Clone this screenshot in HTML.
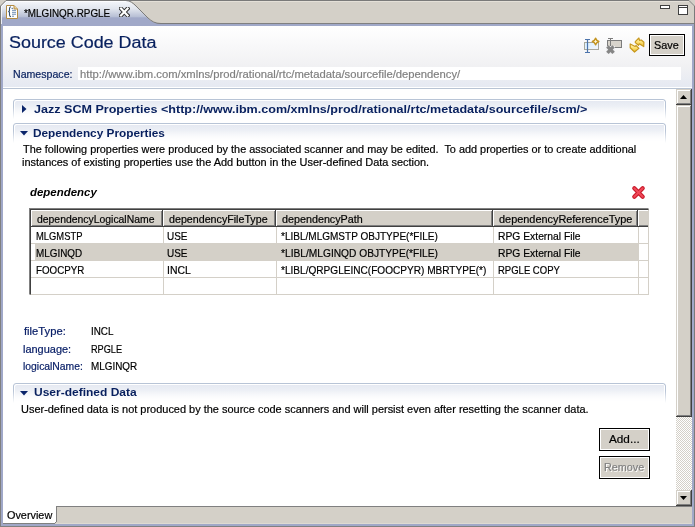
<!DOCTYPE html>
<html><head><meta charset="utf-8">
<style>
*{margin:0;padding:0;box-sizing:border-box}
html,body{width:695px;height:527px;overflow:hidden;background:#d4d0c8;font-family:"Liberation Sans",sans-serif;font-size:11px;color:#000}
.a{position:absolute}
.t{position:absolute;white-space:nowrap;line-height:13px;font-size:11px;transform-origin:0 0}
.nv{color:#0a246a}
.b{font-weight:bold}
</style></head><body>
<!-- outer frame -->
<div class="a" style="left:6px;top:0;width:683px;height:1px;background:#7a7a7a"></div>
<div class="a" style="left:6px;top:1px;width:683px;height:1px;background:#e4e0d8"></div>
<div class="a" style="left:0;top:6px;width:1px;height:521px;background:#808080"></div>
<div class="a" style="left:694px;top:6px;width:1px;height:521px;background:#7a7a7a"></div>
<svg class="a" style="left:688px;top:0" width="7" height="7"><path d="M1,0.5 L6.5,6" stroke="#7a7a7a" stroke-width="0.9"/></svg>
<!-- tab bar bottom line -->
<div class="a" style="left:1px;top:23px;width:693px;height:1px;background:#808080"></div>
<div class="a" style="left:1px;top:24px;width:693px;height:2px;background:#a0a8c8"></div>
<!-- active tab -->
<svg class="a" style="left:0;top:0" width="200" height="26">
<defs><linearGradient id="tg" x1="0" y1="0" x2="0" y2="1">
<stop offset="0" stop-color="#f4f6fa"/><stop offset="0.3" stop-color="#e2e6ee"/><stop offset="0.64" stop-color="#b6bed4"/><stop offset="0.67" stop-color="#a0a8c8"/><stop offset="1" stop-color="#a0a8c8"/></linearGradient></defs>
<path d="M1,26 L1,6 L6,1 L126,1 C130,1 133,3.5 136,6.5 L148,18.5 C152,22 155,23.5 161,23.5 L200,23.5 L200,26 Z" fill="url(#tg)"/>
<path d="M0.5,26 L0.5,6 L6,0.5 L126,0.5 C130,0.5 133,3 136,6 L148,18 C152,21.5 155,23.5 161,23.5 L200,23.5" fill="none" stroke="#7a7a7a" stroke-width="1"/>
<path d="M1.5,26 L1.5,6.5 L6.5,1.5 L126,1.5" fill="none" stroke="#fff" stroke-opacity="0.8" stroke-width="1"/>
</svg>
<!-- left/right lavender borders -->
<div class="a" style="left:1px;top:24px;width:2px;height:500px;background:#a0a8c8"></div>
<div class="a" style="left:692px;top:24px;width:2px;height:500px;background:#a0a8c8"></div>
<div class="a" style="left:1px;top:524px;width:693px;height:2px;background:#a0a8c8"></div>
<div class="a" style="left:0;top:526px;width:695px;height:1px;background:#808080"></div>

<!-- tab title -->
<svg class="a" style="left:6px;top:5px" width="12" height="14">
<path d="M0.5,0.5 L8,0.5 L11.5,4 L11.5,13.5 L0.5,13.5 Z" fill="#fff" stroke="#b48c44"/>
<path d="M8,0.5 L8,4 L11.5,4" fill="#ecd498" stroke="#b48c44"/>
<path d="M5,1.8 Q3.5,2 3.5,3.5 L3.5,5.5 Q3.5,6.5 2.2,6.5 Q3.5,6.5 3.5,7.5 L3.5,10 Q3.5,11.5 5,11.8" fill="none" stroke="#34506e" stroke-width="1.1"/>
<rect x="5.6" y="2.8" width="1.2" height="1.2" fill="#4a6a8c"/>
<rect x="6" y="4.8" width="4" height="1.1" fill="#7c98bc"/>
<rect x="6" y="6.8" width="4" height="1.1" fill="#7c98bc"/>
<rect x="6" y="8.7" width="4" height="1.1" fill="#7c98bc"/>
<rect x="6" y="10.7" width="2" height="1.1" fill="#7c98bc"/>
</svg>
<div class="t" style="left:23.8px;top:6.8px;transform:scaleX(0.8979);;-webkit-text-stroke-width:0.2px;">*MLGINQR.RPGLE</div>
<svg class="a" style="left:119px;top:7px" width="11" height="10">
<path d="M2,1.6 L8.6,8.4 M8.6,1.6 L2,8.4" stroke="#303030" stroke-width="4.2" stroke-linecap="square"/>
<path d="M2,1.6 L8.6,8.4 M8.6,1.6 L2,8.4" stroke="#fff" stroke-width="2.2" stroke-linecap="square"/>
</svg>
<!-- min / max -->
<div class="a" style="left:660px;top:5px;width:10px;height:4px;border:1px solid #404040;background:#fff"></div>
<div class="a" style="left:678px;top:5px;width:10px;height:10px;border:1px solid #404040;background:#fff;box-shadow:inset 0 1px #fff,inset 0 2px #404040"></div>

<!-- content white -->
<div class="a" style="left:3px;top:26px;width:689px;height:480px;background:#fff"></div>
<!-- header gradient -->
<div class="a" style="left:3px;top:26px;width:689px;height:61px;background:linear-gradient(#fff 0%,#f1f1f3 66%,#e5e9f2 100%)"></div>
<div class="a" style="left:3px;top:88px;width:689px;height:1px;background:#b8c4d4"></div>

<div class="t" style="left:8.68px;top:32.6px;transform:scaleX(1.1198);font-size:16px;line-height:20px;-webkit-text-stroke-width:0.2px;color:#08205e">Source Code Data</div>
<div class="t" style="left:12.74px;top:68.0px;transform:scaleX(0.9633);;-webkit-text-stroke-width:0.2px;color:#08205e">Namespace:</div>
<div class="a" style="left:78px;top:67px;width:603px;height:13px;background:#fff"></div>
<div class="t" style="left:79.68px;top:68.0px;transform:scaleX(1.0229);;-webkit-text-stroke-width:0.2px;color:#808080">http://www.ibm.com/xmlns/prod/rational/rtc/metadata/sourcefile/dependency/</div>

<!-- toolbar icons -->
<svg class="a" style="left:580px;top:34px" width="24" height="24">
<defs><linearGradient id="ig1" x1="0" y1="0" x2="1" y2="1"><stop offset="0" stop-color="#d8f0ff"/><stop offset="1" stop-color="#f4f6fa"/></linearGradient>
<linearGradient id="gold" x1="0" y1="0" x2="0" y2="1"><stop offset="0" stop-color="#fff8d0"/><stop offset="0.5" stop-color="#fce070"/><stop offset="1" stop-color="#e8b830"/></linearGradient></defs>
<rect x="4.5" y="8.5" width="14" height="7" fill="url(#ig1)" stroke="#a8a89c"/>
<path d="M5,5.5 H10 M7.5,5.5 V18.5 M5,18.5 H10" stroke="#4c74ac" stroke-width="1.2"/>
<path d="M15.6,4.2 Q16.4,6.6 18.8,7.5 Q16.4,8.4 15.6,10.8 Q14.8,8.4 12.4,7.5 Q14.8,6.6 15.6,4.2 Z" fill="#fff8d8" stroke="#c49420" stroke-width="1.5" stroke-linejoin="round"/>
</svg>
<svg class="a" style="left:602px;top:34px" width="24" height="24">
<rect x="5.5" y="6.5" width="14" height="7" fill="#d8d4cc" stroke="#7c7c7c"/>
<path d="M6,4.5 H11 M8.5,4.5 V12" stroke="#7c7c7c" stroke-width="1"/>
<rect x="4" y="12" width="9" height="8" fill="#f1f1f3"/>
<path d="M6.6,13.6 L10.4,17.6 M10.4,13.6 L6.6,17.6" stroke="#858585" stroke-width="3.4" stroke-linecap="square"/>
</svg>
<svg class="a" style="left:628px;top:36px" width="18" height="18">
<path d="M10.9,2 L7.3,5.6 L7.3,6.6 L10.5,9.3 L11.3,7.8 L15.7,10.6 L15.9,6.3 L13.3,4 L11.5,4.3 Z" fill="url(#gold)" stroke="#c8981c" stroke-width="1.2" stroke-linejoin="round"/>
<path d="M2.2,8 L2.2,11.8 L6.5,16 L10.9,12.4 L8,9.5 L7.2,10.5 Z" fill="url(#gold)" stroke="#c8981c" stroke-width="1.2" stroke-linejoin="round"/>
</svg>
<!-- Save button -->
<div class="a" style="left:649px;top:34px;width:36px;height:22px;border:1px solid #000;background:#d4d0c8;box-shadow:inset 0 0 0 1px #fff"></div>
<div class="t" style="left:653.71px;top:38.8px;transform:scaleX(0.9875);;-webkit-text-stroke-width:0.2px;">Save</div>

<!-- scrollbar -->
<div class="a" style="left:676px;top:89px;width:16px;height:417px;background:repeating-conic-gradient(#d4d0c8 0 25%,#fff 0 50%) 0 0/2px 2px"></div>
<div class="a" style="left:676px;top:89px;width:16px;height:16px;background:#d4d0c8;box-shadow:inset -1px -1px #404040,inset 1px 1px #d4d0c8,inset -2px -2px #808080,inset 2px 2px #fff"></div>
<svg class="a" style="left:680px;top:95px" width="8" height="4"><path d="M3.5,0 L7,4 L0,4 Z" fill="#000"/></svg>
<div class="a" style="left:676px;top:105px;width:16px;height:312px;background:#d4d0c8;box-shadow:inset -1px -1px #404040,inset 1px 1px #d4d0c8,inset -2px -2px #808080,inset 2px 2px #fff"></div>
<div class="a" style="left:676px;top:490px;width:16px;height:16px;background:#d4d0c8;box-shadow:inset -1px -1px #404040,inset 1px 1px #d4d0c8,inset -2px -2px #808080,inset 2px 2px #fff"></div>
<svg class="a" style="left:680px;top:496px" width="8" height="4"><path d="M0,0 L7,0 L3.5,4 Z" fill="#000"/></svg>

<!-- section 1 -->
<div class="a" style="left:13px;top:99px;width:653px;height:20px;border:1px solid #b8c4d6;border-bottom:none;border-radius:3px 3px 0 0;background:linear-gradient(#e4e8f1,#fff);box-shadow:inset 1px 1px #fff,inset -1px 0 #fff;-webkit-mask-image:linear-gradient(#000 40%,transparent)"></div>
<svg class="a" style="left:22px;top:105px" width="5" height="8"><path d="M0,0 L4.5,4 L0,8 Z" fill="#0a246a"/></svg>
<div class="t" style="left:34.0px;top:102.8px;transform:scaleX(1.1412);font-weight:bold;color:#08205e">Jazz SCM Properties &lt;http://www.ibm.com/xmlns/prod/rational/rtc/metadata/sourcefile/scm/&gt;</div>

<!-- section 2 -->
<div class="a" style="left:13px;top:123px;width:653px;height:20px;border:1px solid #b8c4d6;border-bottom:none;border-radius:3px 3px 0 0;background:linear-gradient(#e4e8f1,#fff);box-shadow:inset 1px 1px #fff,inset -1px 0 #fff;-webkit-mask-image:linear-gradient(#000 40%,transparent)"></div>
<svg class="a" style="left:20px;top:131px" width="8" height="5"><path d="M0,0 L8,0 L4,4.5 Z" fill="#0a246a"/></svg>
<div class="t" style="left:32.63px;top:126.5px;transform:scaleX(1.0738);font-weight:bold;color:#08205e">Dependency Properties</div>
<div class="t" style="left:22.7px;top:142.7px;transform:scaleX(0.9892);;-webkit-text-stroke-width:0.2px;">The following properties were produced by the associated scanner and may be edited.&nbsp; To add properties or to create additional</div>
<div class="t" style="left:21.7px;top:155.6px;transform:scaleX(0.9953);;-webkit-text-stroke-width:0.2px;">instances of existing properties use the Add button in the User-defined Data section.</div>

<div class="t" style="left:30.1px;top:185.8px;transform:scaleX(1.04);font-weight:bold;font-style:italic;">dependency</div>
<svg class="a" style="left:631px;top:185px" width="15" height="15">
<path d="M3.3,3.3 L11.7,11.7 M11.7,3.3 L3.3,11.7" stroke="#c81828" stroke-width="4.2" stroke-linecap="round"/>
<path d="M3.3,3.3 L11.7,11.7 M11.7,3.3 L3.3,11.7" stroke="#f04858" stroke-width="2" stroke-linecap="round"/>
</svg>

<!-- table -->
<div class="a" style="left:29px;top:208px;width:620px;height:87px;background:#fff;border-left:1px solid #808080;border-top:1px solid #808080;border-right:1px solid #fff;border-bottom:1px solid #fff"></div>
<div class="a" style="left:30px;top:209px;width:619px;height:86px;border-left:1px solid #404040;border-top:1px solid #404040;border-right:1px solid #d4d0c8;border-bottom:1px solid #d4d0c8"></div>
<!-- header cells -->
<div class="a" style="left:31px;top:210px;width:132px;height:17px;background:#d4d0c8;box-shadow:inset -1px -1px #404040,inset 1px 1px #fff,inset -2px -2px #808080"></div>
<div class="a" style="left:163px;top:210px;width:113px;height:17px;background:#d4d0c8;box-shadow:inset -1px -1px #404040,inset 1px 1px #fff,inset -2px -2px #808080"></div>
<div class="a" style="left:276px;top:210px;width:217px;height:17px;background:#d4d0c8;box-shadow:inset -1px -1px #404040,inset 1px 1px #fff,inset -2px -2px #808080"></div>
<div class="a" style="left:493px;top:210px;width:145px;height:17px;background:#d4d0c8;box-shadow:inset -1px -1px #404040,inset 1px 1px #fff,inset -2px -2px #808080"></div>
<div class="a" style="left:638px;top:210px;width:10px;height:17px;background:#d4d0c8;box-shadow:inset 0 -1px #404040,inset 1px 1px #fff,inset 0 -2px #808080"></div>
<!-- selected row -->
<div class="a" style="left:35px;top:244px;width:603px;height:16px;background:#d4d0c8"></div>
<!-- grid -->
<div class="a" style="left:31px;top:243px;width:617px;height:1px;background:#d4d0c8"></div>
<div class="a" style="left:31px;top:260px;width:617px;height:1px;background:#d4d0c8"></div>
<div class="a" style="left:31px;top:277px;width:617px;height:1px;background:#d4d0c8"></div>
<div class="a" style="left:163px;top:227px;width:1px;height:67px;background:#d4d0c8"></div>
<div class="a" style="left:276px;top:227px;width:1px;height:67px;background:#d4d0c8"></div>
<div class="a" style="left:493px;top:227px;width:1px;height:67px;background:#d4d0c8"></div>
<div class="a" style="left:638px;top:227px;width:1px;height:67px;background:#d4d0c8"></div>
<!-- header text -->
<div class="t" style="left:37.0px;top:212.7px;transform:scaleX(0.946);;-webkit-text-stroke-width:0.2px;">dependencyLogicalName</div>
<div class="t" style="left:169.0px;top:212.7px;transform:scaleX(0.9713);;-webkit-text-stroke-width:0.2px;">dependencyFileType</div>
<div class="t" style="left:281.8px;top:212.7px;transform:scaleX(0.978);;-webkit-text-stroke-width:0.2px;">dependencyPath</div>
<div class="t" style="left:498.6px;top:212.7px;transform:scaleX(0.991);;-webkit-text-stroke-width:0.2px;">dependencyReferenceType</div>
<!-- rows -->
<div class="t" style="left:36.05px;top:230.0px;transform:scaleX(0.8528);;-webkit-text-stroke-width:0.2px;">MLGMSTP</div>
<div class="t" style="left:167.4px;top:230.0px;transform:scaleX(0.9048);;-webkit-text-stroke-width:0.2px;">USE</div>
<div class="t" style="left:281.3px;top:230.0px;transform:scaleX(0.911);;-webkit-text-stroke-width:0.2px;">*LIBL/MLGMSTP OBJTYPE(*FILE)</div>
<div class="t" style="left:497.66px;top:230.0px;transform:scaleX(0.9379);;-webkit-text-stroke-width:0.2px;">RPG External File</div>
<div class="t" style="left:36.0px;top:247.0px;transform:scaleX(0.898);;-webkit-text-stroke-width:0.2px;">MLGINQD</div>
<div class="t" style="left:167.4px;top:247.0px;transform:scaleX(0.9048);;-webkit-text-stroke-width:0.2px;">USE</div>
<div class="t" style="left:281.3px;top:247.0px;transform:scaleX(0.9272);;-webkit-text-stroke-width:0.2px;">*LIBL/MLGINQD OBJTYPE(*FILE)</div>
<div class="t" style="left:497.66px;top:247.0px;transform:scaleX(0.9379);;-webkit-text-stroke-width:0.2px;">RPG External File</div>
<div class="t" style="left:36.11px;top:264.0px;transform:scaleX(0.8868);;-webkit-text-stroke-width:0.2px;">FOOCPYR</div>
<div class="t" style="left:167.35px;top:264.0px;transform:scaleX(0.95);;-webkit-text-stroke-width:0.2px;">INCL</div>
<div class="t" style="left:281.3px;top:264.0px;transform:scaleX(0.9161);;-webkit-text-stroke-width:0.2px;">*LIBL/QRPGLEINC(FOOCPYR) MBRTYPE(*)</div>
<div class="t" style="left:497.74px;top:264.0px;transform:scaleX(0.8643);;-webkit-text-stroke-width:0.2px;">RPGLE COPY</div>

<!-- properties -->
<div class="t" style="left:23.7px;top:325.0px;transform:scaleX(1.02);;-webkit-text-stroke-width:0.2px;color:#0a2068">fileType:</div>
<div class="t" style="left:91.1px;top:325.0px;transform:scaleX(0.8958);;-webkit-text-stroke-width:0.2px;">INCL</div>
<div class="t" style="left:22.7px;top:342.5px;transform:scaleX(0.9957);;-webkit-text-stroke-width:0.2px;color:#0a2068">language:</div>
<div class="t" style="left:91.17px;top:342.5px;transform:scaleX(0.8333);;-webkit-text-stroke-width:0.2px;">RPGLE</div>
<div class="t" style="left:22.76px;top:360.3px;transform:scaleX(0.9419);;-webkit-text-stroke-width:0.2px;color:#0a2068">logicalName:</div>
<div class="t" style="left:91.1px;top:360.3px;transform:scaleX(0.898);;-webkit-text-stroke-width:0.2px;">MLGINQR</div>

<!-- section 3 -->
<div class="a" style="left:13px;top:383px;width:653px;height:20px;border:1px solid #b8c4d6;border-bottom:none;border-radius:3px 3px 0 0;background:linear-gradient(#e4e8f1,#fff);box-shadow:inset 1px 1px #fff,inset -1px 0 #fff;-webkit-mask-image:linear-gradient(#000 40%,transparent)"></div>
<svg class="a" style="left:20px;top:391px" width="8" height="5"><path d="M0,0 L8,0 L4,4.5 Z" fill="#0a246a"/></svg>
<div class="t" style="left:33.5px;top:386.4px;transform:scaleX(1.0904);font-weight:bold;color:#08205e">User-defined Data</div>
<div class="t" style="left:20.6px;top:402.6px;transform:scaleX(0.996);;-webkit-text-stroke-width:0.2px;">User-defined data is not produced by the source code scanners and will persist even after resetting the scanner data.</div>

<!-- buttons -->
<div class="a" style="left:599px;top:428px;width:51px;height:23px;border:1px solid #000;background:#d4d0c8;box-shadow:inset 0 0 0 1px #fff"></div>
<div class="t" style="left:608.6px;top:432.6px;transform:scaleX(1.0679);;-webkit-text-stroke-width:0.2px;">Add...</div>
<div class="a" style="left:599px;top:456px;width:51px;height:23px;border:1px solid #000;background:#d4d0c8;box-shadow:inset 0 0 0 1px #fff"></div>
<div class="t" style="left:603.62px;top:461.1px;transform:scaleX(0.98);;-webkit-text-stroke-width:0.2px;color:#808080;text-shadow:1px 1px #fff">Remove</div>

<!-- bottom tabs -->
<div class="a" style="left:56px;top:506px;width:636px;height:17px;background:#d4d0c8;border-top:1px solid #808080;border-left:1px solid #808080"></div>
<div class="a" style="left:3px;top:506px;width:53px;height:17px;background:#fff"></div>
<div class="a" style="left:3px;top:523px;width:52px;height:1px;background:#808080"></div>
<div class="a" style="left:55px;top:522px;width:1px;height:1px;background:#808080"></div>
<div class="a" style="left:56px;top:522px;width:1px;height:1px;background:#d4d0c8"></div>
<div class="a" style="left:56px;top:523px;width:636px;height:1px;background:#dedad2"></div>
<div class="t" style="left:6.8px;top:508.7px;transform:scaleX(0.987);;-webkit-text-stroke-width:0.2px;">Overview</div>
</body></html>
